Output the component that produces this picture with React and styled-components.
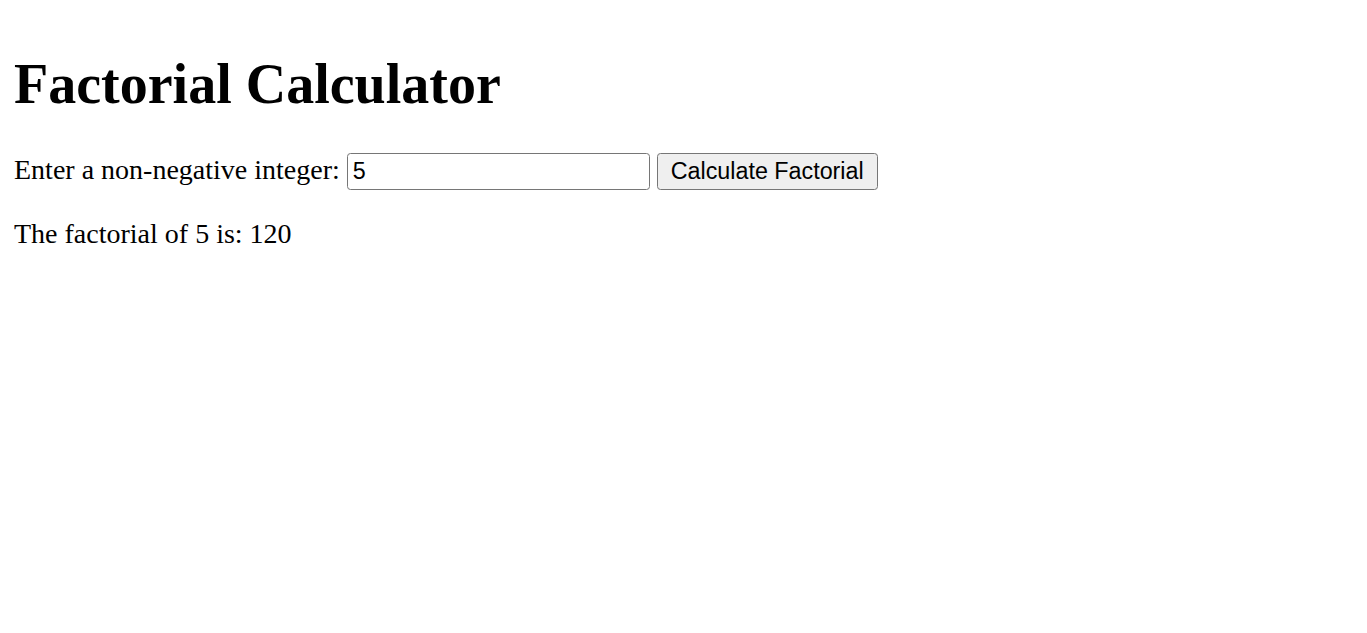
import React, { useState } from 'react';
import styled, { createGlobalStyle } from 'styled-components';

const GlobalStyle = createGlobalStyle`
    html, body {
        margin: 0;
        padding: 0;
        background: #ffffff;
    }
    body {
        font-family: "Liberation Serif", "Times New Roman", serif;
        font-size: 28px;
        color: #000000;
    }
`;

const Page = styled.div`
    padding: 14px;
    display: flow-root;
`;

const Title = styled.h1`
    font-size: 56px;
    font-weight: bold;
    margin: 37.5px 0;
`;

const Row = styled.div`
    margin: 0;
`;

const NumberInput = styled.input`
    box-sizing: border-box;
    width: 303px;
    height: 37px;
    font-family: "Liberation Sans", Arial, sans-serif;
    font-size: 23.3px;
    padding: 1.75px 5px;
    border: 1px solid #767676;
    border-radius: 3.5px;
    color: #000000;
    background: #ffffff;
    outline: none;
`;

const CalcButton = styled.button`
    box-sizing: border-box;
    height: 37px;
    font-family: "Liberation Sans", Arial, sans-serif;
    font-size: 23.3px;
    padding: 1.75px 13px;
    border: 1px solid #767676;
    border-radius: 3.5px;
    background: #efefef;
    color: #000000;
    cursor: pointer;
`;

const Result = styled.p`
    margin: 28px 0;
`;

const factorial = (n) => {
    let r = 1;
    for (let i = 2; i <= n; i++) r *= i;
    return r;
};

const App = () => {
    const [value, setValue] = useState('5');
    const [shown, setShown] = useState(5);

    return (
        <Page>
            <GlobalStyle />
            <Title>Factorial Calculator</Title>
            <Row>
                <label htmlFor="num">Enter a non-negative integer:</label>{' '}
                <NumberInput id="num" type="text" value={value} onChange={(e) => setValue(e.target.value)} />{' '}
                <CalcButton onClick={() => setShown(parseInt(value, 10) || 0)}>Calculate Factorial</CalcButton>
            </Row>
            <Result>The factorial of {shown} is: {factorial(shown)}</Result>
        </Page>
    );
};

export default App;
